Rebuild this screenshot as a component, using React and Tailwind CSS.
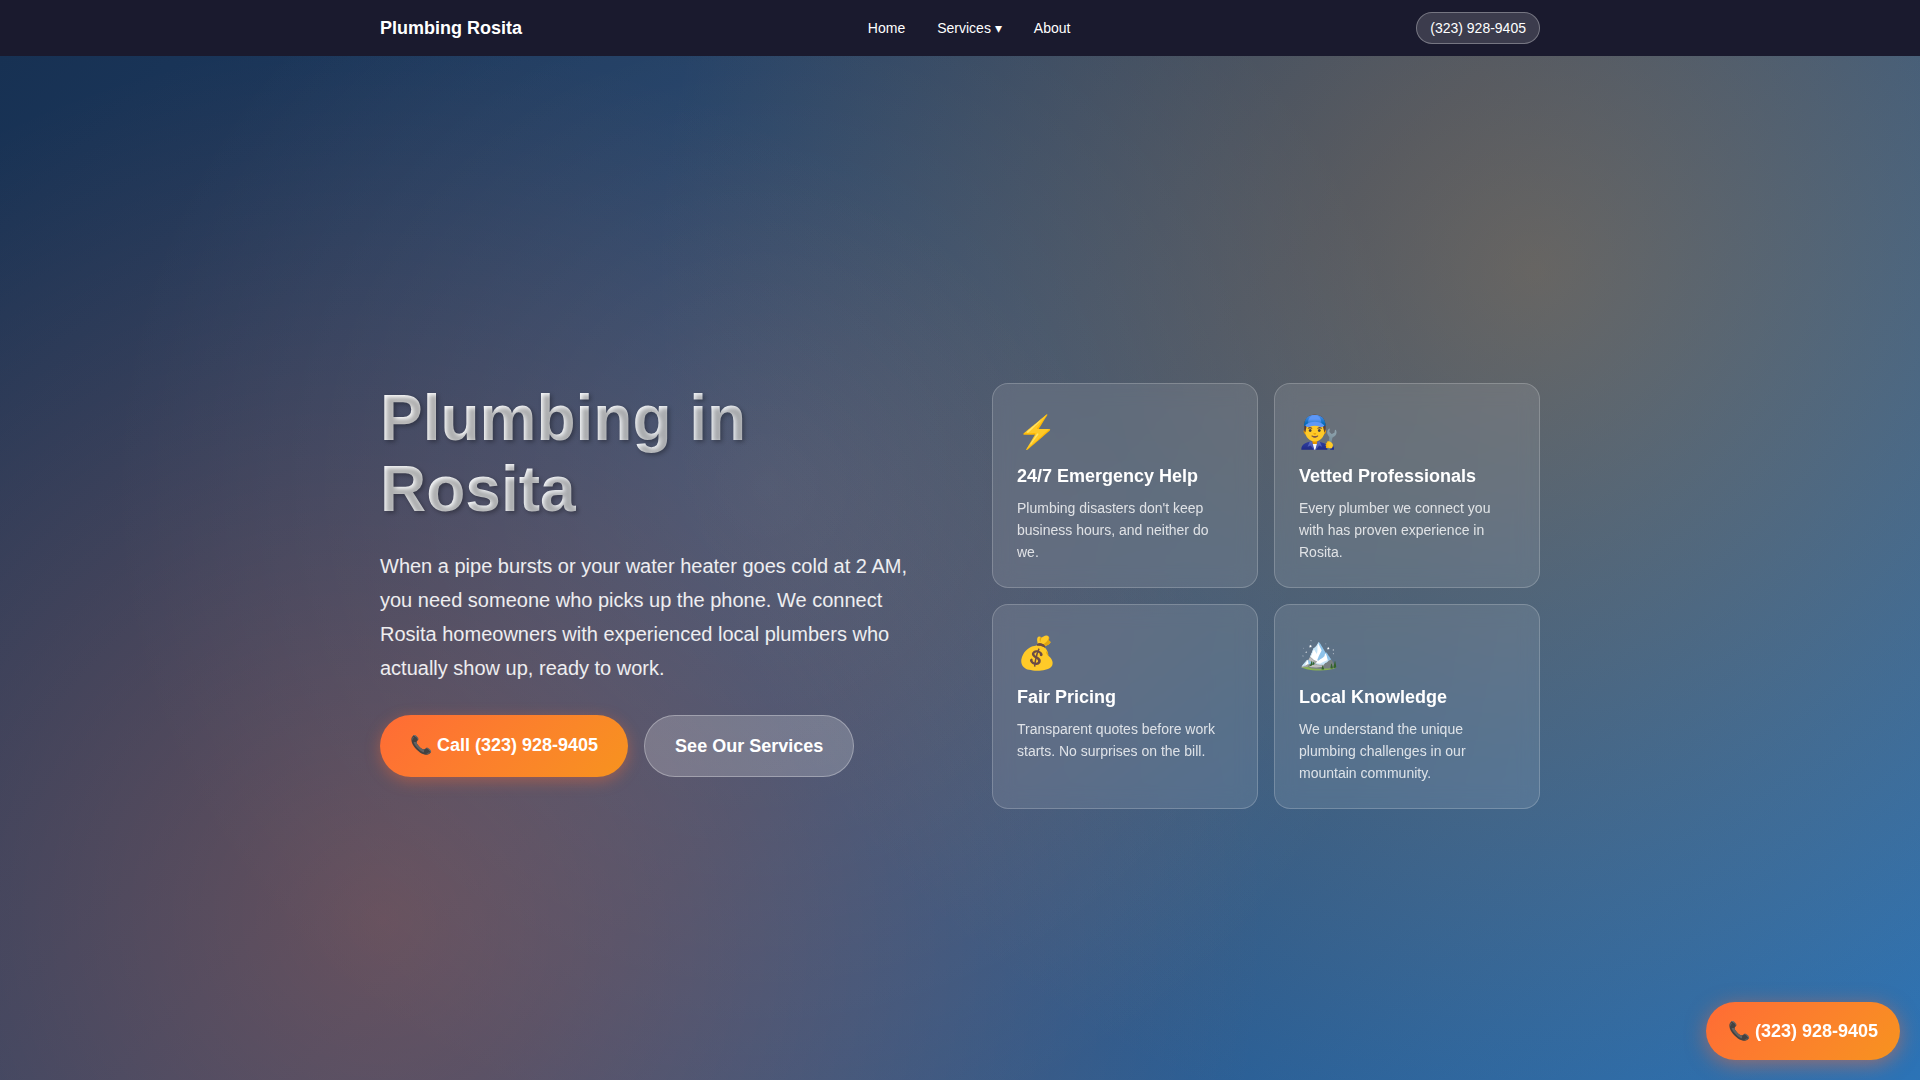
const cards = [
  { icon: "⚡", title: "24/7 Emergency Help", text: "Plumbing disasters don't keep business hours, and neither do we." },
  { icon: "👨‍🔧", title: "Vetted Professionals", text: "Every plumber we connect you with has proven experience in Rosita." },
  { icon: "💰", title: "Fair Pricing", text: "Transparent quotes before work starts. No surprises on the bill." },
  { icon: "🏔️", title: "Local Knowledge", text: "We understand the unique plumbing challenges in our mountain community." },
];

function Header() {
  return (
    <header className="sticky top-0 z-10 bg-[#1a1a2e]">
      <div className="mx-auto flex h-14 max-w-[1200px] items-center justify-between px-5">
        <a href="#home" className="text-lg font-bold">Plumbing Rosita</a>
        <nav className="flex gap-8 text-sm">
          <a href="#home">Home</a>
          <a href="#services">Services ▾</a>
          <a href="#about">About</a>
        </nav>
        <a href="tel:3239289405" className="rounded-full border border-white/30 bg-white/15 px-[13px] py-1 text-sm leading-[22px]">
          (323) 928-9405
        </a>
      </div>
    </header>
  );
}

function Card({ icon, title, text }) {
  return (
    <article className="rounded-2xl border border-white/20 bg-white/10 p-6 backdrop-blur-[10px]">
      <div className="mb-2 text-[32px] leading-[48px]">{icon}</div>
      <h2 className="mb-2 text-lg leading-[25px] font-bold">{title}</h2>
      <p className="text-sm leading-[22px] text-white/80">{text}</p>
    </article>
  );
}

export default function App() {
  return (
    <div className="font-['Liberation_Sans',sans-serif] text-white">
      <Header />
      <main className="flex min-h-screen items-center bg-[radial-gradient(circle_at_20%_80%,rgba(255,107,53,0.3)_0%,transparent_50%),radial-gradient(circle_at_80%_20%,rgba(247,147,30,0.3)_0%,transparent_50%),radial-gradient(circle_at_40%_40%,rgba(255,255,255,0.1)_0%,transparent_50%),linear-gradient(135deg,#173153_0%,#284a75_50%,#2c75b9_100%)]">
        <div className="mx-auto grid w-full max-w-[1200px] grid-cols-2 items-start gap-16 px-5 py-20">
          <section>
            <h1 className="mb-6 bg-linear-135 from-white to-[#e2e8f0] bg-clip-text text-[64px] leading-[71px] font-bold text-transparent [text-shadow:2px_2px_4px_rgba(0,0,0,0.3)]">
              Plumbing in Rosita
            </h1>
            <p className="mb-[30px] text-xl leading-[34px] text-white/90">
              When a pipe bursts or your water heater goes cold at 2 AM, you need someone who picks up the phone. We connect Rosita homeowners with experienced local plumbers who actually show up, ready to work.
            </p>
            <div className="flex flex-wrap gap-4">
              <a href="tel:3239289405" className="rounded-full bg-linear-135 from-[#ff6b35] to-[#f7931e] px-[30px] py-4 text-lg font-bold shadow-[0_4px_15px_rgba(255,107,53,0.4)]">
                📞 Call (323) 928-9405
              </a>
              <a href="#services" className="rounded-full border border-white/30 bg-white/20 px-[30px] py-4 text-lg font-bold">
                See Our Services
              </a>
            </div>
          </section>
          <section className="grid grid-cols-2 gap-4">
            {cards.map((card) => <Card key={card.title} {...card} />)}
          </section>
        </div>
      </main>
      <a href="tel:3239289405" className="fixed right-5 bottom-5 rounded-full bg-linear-135 from-[#ff6b35] to-[#f7931e] px-[22px] py-[15px] text-lg font-bold shadow-[0_4px_20px_rgba(255,107,53,0.5)]">
        📞 (323) 928-9405
      </a>
    </div>
  );
}
